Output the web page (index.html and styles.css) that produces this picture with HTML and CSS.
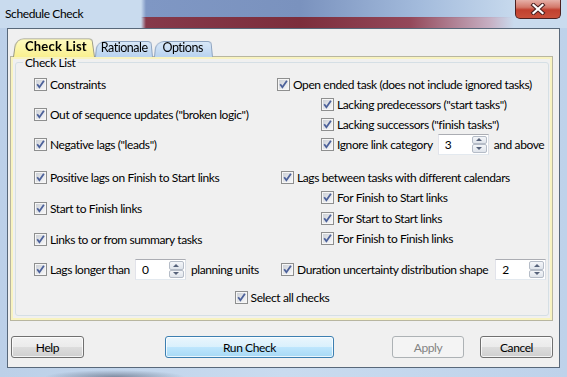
FILE: index.html
```html
<!DOCTYPE html>
<html>
<head>
<meta charset="utf-8">
<link rel="stylesheet" href="styles.css">
</head>
<body>
<svg class="defs" width="0" height="0">
  <defs>
    <linearGradient id="cbg" x1="0" y1="0" x2="1" y2="1">
      <stop offset="0" stop-color="#cdd1d7"/>
      <stop offset="1" stop-color="#f7f7f8"/>
    </linearGradient>
    <symbol id="cb" viewBox="0 0 13 13">
      <rect x="0.5" y="0.5" width="12" height="12" fill="#f6f6f6" stroke="#8e8f8f"/>
      <rect x="2" y="2" width="9" height="9" fill="url(#cbg)"/>
      <path d="M3.2 6.3 L5.4 9.3 L9.9 2.8" fill="none" stroke="#4c619a" stroke-width="1.8"/>
    </symbol>
  </defs>
</svg>
<div class="window">
  <div class="titlebar">
    <span class="title">Schedule Check</span>
    <div class="close">
      <svg width="16" height="12" viewBox="0 0 16 12">
        <path d="M3.5 2 L12.5 10 M12.5 2 L3.5 10" stroke="#4a2020" stroke-width="4.2" stroke-linecap="square"/>
        <path d="M3.5 2 L12.5 10 M12.5 2 L3.5 10" stroke="#ffffff" stroke-width="2.2" stroke-linecap="square"/>
      </svg>
    </div>
  </div>
  <div class="client">
    <div class="tabs">
      <div class="tab active">Check List</div>
      <div class="tab t-rat">Rationale</div>
      <div class="tab t-opt">Options</div>
    </div>
    <div class="panel">
      <fieldset class="group">
        <legend>Check List</legend>
        <div class="gc">
          <div class="sec sec-a">
            <div class="col">
              <label class="row"><svg class="cb"><use href="#cb"/></svg>Constraints</label>
              <label class="row"><svg class="cb"><use href="#cb"/></svg>Out of sequence updates ("broken logic")</label>
              <label class="row"><svg class="cb"><use href="#cb"/></svg>Negative lags ("leads")</label>
            </div>
            <div class="col">
              <label class="row"><svg class="cb"><use href="#cb"/></svg>Open ended task (does not include ignored tasks)</label>
              <label class="row sub"><svg class="cb"><use href="#cb"/></svg>Lacking predecessors ("start tasks")</label>
              <label class="row sub"><svg class="cb"><use href="#cb"/></svg>Lacking successors ("finish tasks")</label>
              <div class="row sub"><svg class="cb"><use href="#cb"/></svg>Ignore link category
                <div class="spin"><span class="val">3</span><span class="arrows"><span class="arr up"></span><span class="arr dn"></span></span></div>and above</div>
            </div>
          </div>
          <div class="sec sec-b">
            <div class="col">
              <label class="row"><svg class="cb"><use href="#cb"/></svg>Positive lags on Finish to Start links</label>
              <label class="row"><svg class="cb"><use href="#cb"/></svg>Start to Finish links</label>
              <label class="row"><svg class="cb"><use href="#cb"/></svg>Links to or from summary tasks</label>
            </div>
            <div class="col">
              <label class="row ind"><svg class="cb"><use href="#cb"/></svg>Lags between tasks with different calendars</label>
              <label class="row sub"><svg class="cb"><use href="#cb"/></svg>For Finish to Start links</label>
              <label class="row sub"><svg class="cb"><use href="#cb"/></svg>For Start to Start links</label>
              <label class="row sub"><svg class="cb"><use href="#cb"/></svg>For Finish to Finish links</label>
            </div>
          </div>
          <div class="sec sec-c">
            <div class="row tall"><svg class="cb"><use href="#cb"/></svg>Lags longer than
              <div class="spin"><span class="val">0</span><span class="arrows"><span class="arr up"></span><span class="arr dn"></span></span></div>planning units</div>
            <div class="row tall ind"><svg class="cb"><use href="#cb"/></svg>Duration uncertainty distribution shape
              <div class="spin wide"><span class="val">2</span><span class="arrows"><span class="arr up"></span><span class="arr dn"></span></span></div></div>
          </div>
          <div class="all">
            <label class="row"><svg class="cb"><use href="#cb"/></svg>Select all checks</label>
          </div>
        </div>
      </fieldset>
    </div>
    <div class="buttons">
      <div class="btn help">Help</div>
      <div class="btn run">Run Check</div>
      <div class="btn apply">Apply</div>
      <div class="btn cancel">Cancel</div>
    </div>
  </div>
</div>
</body>
</html>
```
FILE: styles.css
```css
* { box-sizing: border-box; }
body {
  margin: 0;
  font-family: Lato, "Noto Sans", sans-serif;
  font-size: 12px;
  letter-spacing: -0.4px;
  color: #000;
}
.defs { display: block; width: 0; height: 0; }

.window {
  width: 567px;
  height: 377px;
  overflow: hidden;
  display: flex;
  flex-direction: column;
  background:
    radial-gradient(ellipse 70px 7px at 115px 377px, rgba(70,80,100,.55), rgba(70,80,100,0)),
    linear-gradient(90deg, #bcd0e8, #c9dbef 50%, #bed2ea);
}

.titlebar {
  height: 28px;
  flex: none;
  display: flex;
  align-items: flex-start;
  background-color: #c9dbee;
  background-image:
    linear-gradient(90deg, transparent 141px, #86394a 146px, #7c2e3c 300px, #94485a 410px, rgba(196,140,160,.55) 490px, transparent 514px),
    linear-gradient(90deg, transparent 141px, #7f97c4 146px, #7a92be 300px, #a3bbdc 420px, transparent 520px);
  background-size: 100% 11px, 100% 18px;
  background-position: 0 17px, 0 0;
  background-repeat: no-repeat;
}
.title { padding: 6px 0 0 5px; line-height: 16px; }
.close {
  margin-left: auto;
  margin-right: 6px;
  width: 46px;
  height: 19px;
  border: 1px solid #4b2020;
  border-top: none;
  border-radius: 0 0 5px 5px;
  background: linear-gradient(#e6b0a8, #d3796b 40%, #c1402f 55%, #c9503b);
  display: flex;
  align-items: center;
  justify-content: center;
}

.client {
  margin: 0 7px;
  height: 340px;
  flex: none;
  border: 1px solid #58687a;
  background: #f0f0f0;
  display: flex;
  flex-direction: column;
}

.tabs {
  height: 28px;
  display: flex;
  align-items: flex-end;
  padding-left: 5px;
  margin-bottom: -1px;
  position: relative;
  z-index: 1;
}
.tab {
  position: relative;
  isolation: isolate;
  height: 17px;
  line-height: 16px;
  padding: 0 6px;
  font-size: 12.5px;
  letter-spacing: -0.5px;
}
.tab::before {
  content: "";
  position: absolute;
  inset: 0;
  z-index: -1;
  border: 1px solid #8ea4c0;
  border-bottom: none;
  border-radius: 9px 4px 0 0;
  background: linear-gradient(#d9e8f8, #b9d3ef);
  transform: perspective(30px) rotateX(6deg);
  transform-origin: bottom;
}
.tab.active {
  height: 20px;
  line-height: 18px;
  padding: 0 8px 0 12px;
  font-size: 13px;
  font-weight: bold;
  letter-spacing: 0.2px;
  z-index: 2;
}
.tab.active::before {
  border-color: #9a9a86;
  background: linear-gradient(#fffbc0, #f9f090);
}
.t-rat { margin-left: 0; padding: 0 5px 0 6px; }
.t-opt { margin-left: 1px; padding: 0 10px 0 9px; }

.panel {
  margin: 0 6px 0 2px;
  height: 265px;
  border: 1px solid #b8b6a0;
  box-shadow: inset 0 0 0 2px #f8f3c0;
  padding: 0 3px 0 4px;
}

.group {
  margin: 0;
  padding: 0;
  height: 259px;
  border: 1px solid #d5dfe5;
  border-radius: 3px;
  min-width: 0;
}
.group legend {
  margin-left: 7px;
  padding: 0 2px;
  line-height: 11px;
}
.gc { padding: 6px 18px 0 18px; }

.sec { display: grid; grid-template-columns: 243px 1fr; }
.sec-a { height: 80px; }
.sec-b { height: 82px; margin-top: 13px; }
.sec-c { height: 21px; margin-top: 10px; }
.col { display: flex; flex-direction: column; justify-content: space-between; }

.row {
  display: flex;
  align-items: center;
  height: 20px;
  gap: 3px;
  white-space: nowrap;
}
.row.tall { height: 21px; }
.sub { margin-left: 44px; }
.ind { margin-left: 4px; }
.cb { width: 13px; height: 13px; flex: none; }

.all { display: flex; justify-content: center; margin-top: 7px; }

.spin {
  display: flex;
  width: 51px;
  height: 21px;
  margin: 0 2px;
  padding: 1px;
  border: 1px solid;
  border-color: #abadb3 #dbdfe6 #e3e9ef #e2e3ea;
  background: #fff;
}
.spin.wide { margin-left: 4px; }
.val { flex: 1; padding-left: 5px; line-height: 17px; }
.arrows { width: 15px; display: flex; flex-direction: column; }
.arr {
  flex: 1;
  border: 1px solid #b5bcc7;
  border-radius: 2px;
  background: linear-gradient(#f4f6f9, #dfe4eb);
  display: flex;
  align-items: center;
  justify-content: center;
}
.arr::after {
  content: "";
  border-left: 3px solid transparent;
  border-right: 3px solid transparent;
  border-bottom: 3px solid #56627a;
}
.arr.dn::after { border-bottom: none; border-top: 3px solid #56627a; }

.buttons { display: flex; margin-top: 15px; padding-left: 3px; }
.btn {
  height: 22px;
  border: 1px solid #707070;
  border-radius: 3px;
  background: linear-gradient(#f2f2f2, #ebebeb 50%, #dddddd 50%, #cfcfcf);
  box-shadow: inset 0 0 0 1px rgba(255,255,255,.75);
  display: flex;
  align-items: center;
  justify-content: center;
}
.help { width: 73px; }
.run {
  width: 169px;
  margin-left: 81px;
  border-color: #3c7fb1;
  background: linear-gradient(#eaf6fd, #d9f0fc 50%, #bee6fd 50%, #a7d9f5);
}
.apply {
  width: 72px;
  margin-left: 58px;
  border-color: #adb2b5;
  background: #f4f4f4;
  color: #838383;
  box-shadow: none;
}
.cancel { width: 73px; margin-left: 16px; }
```
